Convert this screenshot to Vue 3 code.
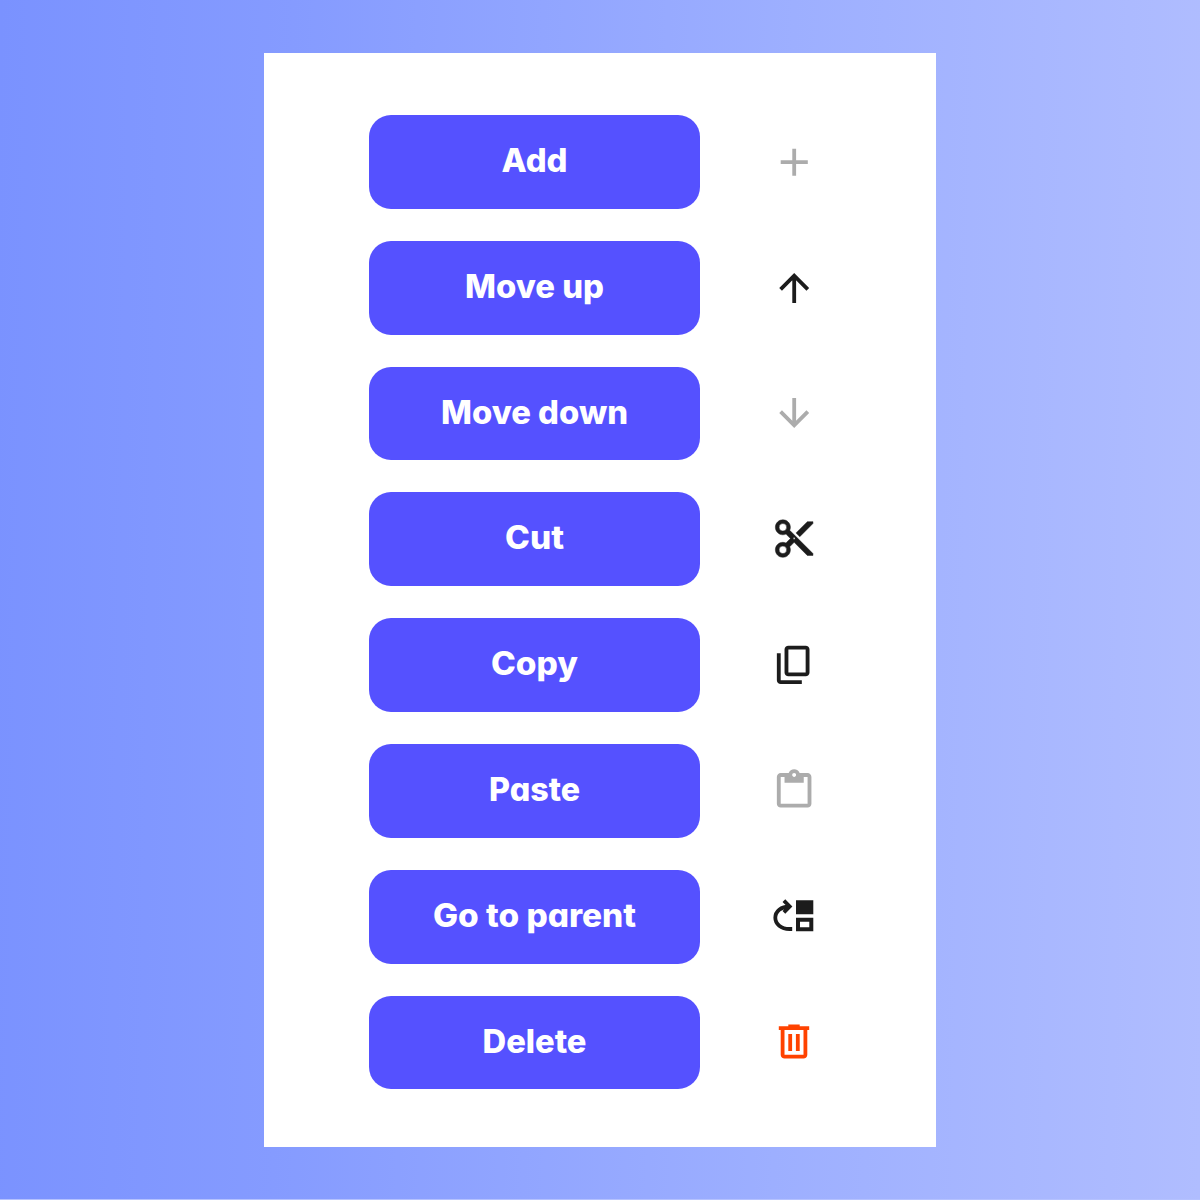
<script setup>
const cut = 'M9.64 7.64c.23-.5.36-1.05.36-1.64 0-2.21-1.79-4-4-4S2 3.79 2 6s1.79 4 4 4c.59 0 1.14-.13 1.64-.36L10 12l-2.36 2.36C7.14 14.13 6.59 14 6 14c-2.21 0-4 1.79-4 4s1.79 4 4 4 4-1.79 4-4c0-.59-.13-1.14-.36-1.64L12 14l7 7h3v-1L9.64 7.64zM6 8a2 2 0 1 1 0-4 2 2 0 0 1 0 4m0 12a2 2 0 1 1 0-4 2 2 0 0 1 0 4m6-7.5c-.28 0-.5-.22-.5-.5s.22-.5.5-.5.5.22.5.5-.22.5-.5.5zM19 3l-6 6 2 2 7-7V3z'
const copy = 'M9 18q-.825 0-1.412-.587T7 16V4q0-.825.588-1.412T9 2h9q.825 0 1.413.588T20 4v12q0 .825-.587 1.413T18 18zm0-2h9V4H9zm-4 6q-.825 0-1.412-.587T3 20V6h2v14h11v2z'
const paste = 'M5 21q-.825 0-1.412-.587T3 19V5q0-.825.588-1.412T5 3h4.175q.275-.875 1.075-1.437T12 1q1 0 1.788.563T14.85 3H19q.825 0 1.413.588T21 5v14q0 .825-.587 1.413T19 21zm0-2h14V5h-2v3H7V5H5zm7-14q.425 0 .713-.288T13 4t-.288-.712T12 3t-.712.288T11 4t.288.713T12 5'
const trash = 'M7 21q-.825 0-1.412-.587T5 19V6H4V4h5V3h6v1h5v2h-1v13q0 .825-.587 1.413T17 21zM17 6H7v13h10zM9 17h2V8H9zm4 0h2V8h-2z'

const actions = [
  { label: 'Add', width: 66, tone: 'muted', stroke: 'M30.2 16.7v27.1M16.7 30.2h27.1' },
  { label: 'Move up', width: 139, tone: 'dark', stroke: 'M30.2 45V17.5M16.6 31.4L30.2 17.6l13.6 13.8' },
  { label: 'Move down', width: 187, tone: 'muted', stroke: 'M30.2 15v27.5M16.6 28.6l13.6 13.8 13.6-13.8' },
  { label: 'Cut', width: 59, tone: 'dark', fill: cut, bold: true, shift: 'translate(7.6 7) scale(1.88)' },
  { label: 'Copy', width: 87, tone: 'dark', fill: copy, shift: 'translate(7.1 6.8) scale(1.92)' },
  { label: 'Paste', width: 91, tone: 'muted', fill: paste, shift: 'translate(7.1 6.3) scale(1.92)' },
  {
    label: 'Go to parent', width: 203, tone: 'dark',
    stroke: 'M28.2 42H25.5C17 42 11.3 37 11.3 30.8S17 19.5 25.5 19.5H26M19.9 13.6l5.8 5.9-5.8 5.9',
    fill: 'M32 13.2h17.3v14H32zM32 30.7h17.3v13.6H32zM36 34.7v5.6h9.3v-5.6z'
  },
  { label: 'Delete', width: 104, tone: 'danger', fill: trash, shift: 'translate(7.2 5.7) scale(1.9)' }
]
</script>

<template>
  <main class="page">
    <section class="panel">
      <div v-for="action in actions" :key="action.label" class="row">
        <button class="action">
          <svg class="label" viewBox="0 0 330.6 93.7">
            <text x="165.5" y="57.2" text-anchor="middle" :textLength="action.width" lengthAdjust="spacingAndGlyphs">{{ action.label }}</text>
          </svg>
        </button>
        <svg class="icon" :class="action.tone" viewBox="0 0 60 60">
          <path v-if="action.stroke" class="line" :d="action.stroke" />
          <path v-if="action.fill" class="solid" :class="{ bold: action.bold }" :d="action.fill" :transform="action.shift" />
        </svg>
      </div>
    </section>
  </main>
</template>

<style>
body {
  margin: 0;
}
</style>

<style scoped>
.page {
  box-sizing: border-box;
  width: 1200px;
  height: 1200px;
  padding-top: 53px;
  border-bottom: 1px solid #b5c2ff;
  background: linear-gradient(91deg, #7a92ff 0%, #859bff 24%, #9dafff 65%, #b0bdff 100%);
}
.panel {
  box-sizing: border-box;
  width: 672px;
  height: 1094px;
  margin: 0 auto;
  padding: 62px 0 0 105.4px;
  display: flex;
  flex-direction: column;
  gap: 32.13px;
  background: #fff;
}
.row {
  display: flex;
  align-items: center;
  gap: 64.2px;
  height: 93.7px;
}
.action {
  width: 330.6px;
  height: 93.7px;
  padding: 0;
  border: 0;
  border-radius: 22px;
  background: #5551ff;
}
.label {
  display: block;
  width: 100%;
  height: 100%;
  fill: #fff;
  font-family: Inter, sans-serif;
  font-size: 32px;
  font-weight: 800;
  font-feature-settings: "cv11";
}
.icon {
  width: 60px;
  height: 60px;
}
.muted {
  color: #acacac;
}
.dark {
  color: #1c1c1c;
}
.danger {
  color: #ff4200;
}
.line {
  fill: none;
  stroke: currentColor;
  stroke-width: 3.8;
}
.solid {
  fill: currentColor;
  fill-rule: evenodd;
}
.bold {
  stroke: currentColor;
  stroke-width: 0.25;
}
</style>
